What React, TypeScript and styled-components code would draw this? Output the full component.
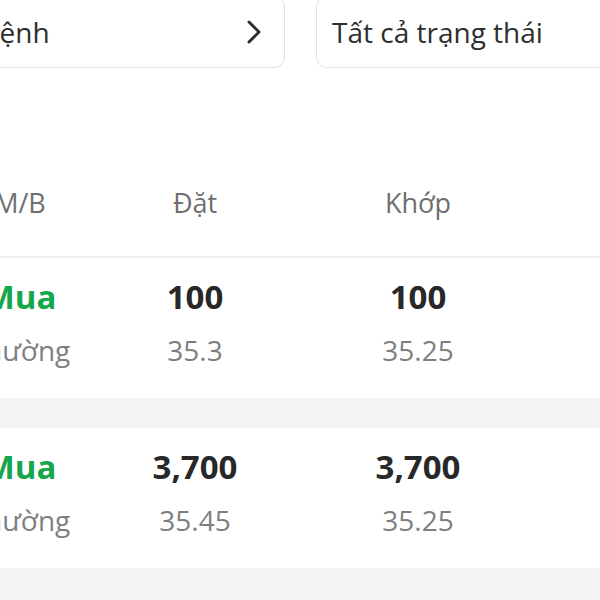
import React from "react";
import styled, { createGlobalStyle } from "styled-components";

const GlobalStyle = createGlobalStyle`
  html, body {
    margin: 0;
    padding: 0;
    background: #ffffff;
    overflow: hidden;
  }
  body {
    font-family: "Open Sans", "Noto Sans", sans-serif;
  }
`;

const Screen = styled.div`
  width: 600px;
  height: 600px;
  overflow: hidden;
  background: #ffffff;
`;

const Content = styled.div`
  margin-left: -108px;
  width: 820px;
`;

const Filters = styled.div`
  display: flex;
  gap: 31px;
  margin-top: -4px;
  margin-bottom: 82px;
`;

const SelectBox = styled.div`
  box-sizing: border-box;
  width: 393px;
  height: 72px;
  display: flex;
  align-items: center;
  justify-content: space-between;
  padding: 0 22px 0 15px;
  border: 1.5px solid #e2e2e2;
  border-radius: 11px;
  background: #ffffff;
  font-size: 28px;
  color: #2e2e2e;
  white-space: nowrap;
`;

const Chevron = () => (
  <svg width="16" height="24" viewBox="0 0 16 24" fill="none">
    <path
      d="M3 2 L13 12 L3 22"
      stroke="#2f2f2f"
      strokeWidth="3"
      strokeLinecap="round"
      strokeLinejoin="round"
    />
  </svg>
);

const Grid = styled.div`
  display: grid;
  grid-template-columns: 130px 220px 226px 1fr;
  padding-left: 63px;
`;

const HeaderRow = styled(Grid)`
  height: 106px;
  align-items: center;
  border-bottom: 2px solid #efefef;
`;

const HeadCell = styled.div`
  text-align: center;
  font-size: 27px;
  line-height: 1.362;
  color: #6e6e6e;
  white-space: nowrap;
`;

const OrderRow = styled(Grid)`
  box-sizing: border-box;
  height: 140px;
  padding-top: 17px;
  background: #ffffff;
`;

const Cell = styled.div`
  display: flex;
  flex-direction: column;
  align-items: center;
  gap: 11px;
  white-space: nowrap;
`;

const Main = styled.span<{ $side?: "buy" | "sell" }>`
  font-size: 33px;
  font-weight: 700;
  line-height: 1.362;
  color: ${(p) =>
    p.$side === "buy" ? "#14a74b" : p.$side === "sell" ? "#e0393e" : "#282828"};
`;

const Sub = styled.span`
  font-size: 28px;
  line-height: 1.362;
  color: #7f7f7f;
`;

const Spacer = styled.div<{ $h: number }>`
  height: ${(p) => p.$h}px;
  background: #f4f4f4;
`;

const orders = [
  { side: "Mua", type: "Thường", qty: "100", price: "35.3", matchQty: "100", matchPrice: "35.25" },
  { side: "Mua", type: "Thường", qty: "3,700", price: "35.45", matchQty: "3,700", matchPrice: "35.25" },
];

export default function App() {
  return (
    <Screen>
      <GlobalStyle />
      <Content>
        <Filters>
          <SelectBox>
            <span>Tất cả lệnh</span>
            <Chevron />
          </SelectBox>
          <SelectBox>
            <span>Tất cả trạng thái</span>
          </SelectBox>
        </Filters>

        <HeaderRow>
          <HeadCell>M/B</HeadCell>
          <HeadCell>Đặt</HeadCell>
          <HeadCell>Khớp</HeadCell>
        </HeaderRow>

        {orders.map((o, i) => (
          <React.Fragment key={i}>
            {i > 0 && <Spacer $h={30} />}
            <OrderRow>
              <Cell>
                <Main $side="buy">{o.side}</Main>
                <Sub>{o.type}</Sub>
              </Cell>
              <Cell>
                <Main>{o.qty}</Main>
                <Sub>{o.price}</Sub>
              </Cell>
              <Cell>
                <Main>{o.matchQty}</Main>
                <Sub>{o.matchPrice}</Sub>
              </Cell>
            </OrderRow>
          </React.Fragment>
        ))}
        <Spacer $h={200} />
      </Content>
    </Screen>
  );
}
